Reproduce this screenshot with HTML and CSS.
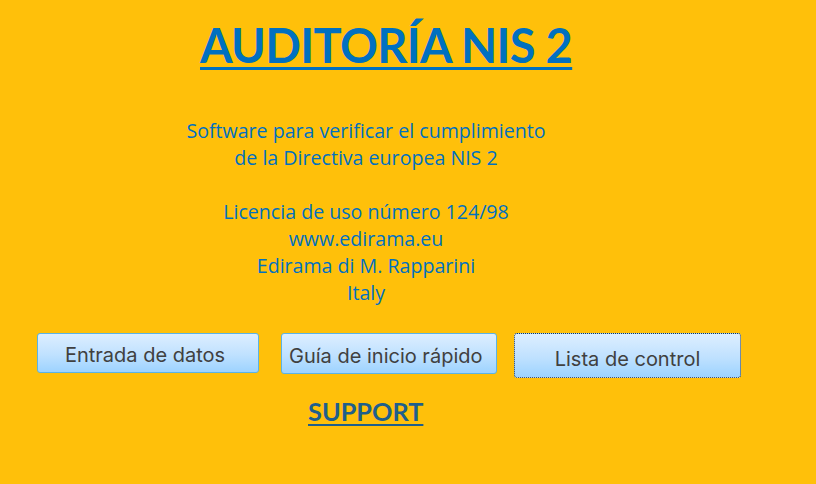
FILE: index.html
```html
<!DOCTYPE html>
<html lang="es">
<head>
<meta charset="utf-8">
<title>AUDITORÍA NIS 2</title>
<link rel="stylesheet" href="styles.css">
</head>
<body>
<div class="page">
  <h1 class="title">AUDITORÍA NIS 2</h1>
  <div class="info">
    <p>Software para verificar el cumplimiento<br>de la Directiva europea NIS 2</p>
    <p>Licencia de uso número 124/98<br>www.edirama.eu<br>Edirama di M. Rapparini<br>Italy</p>
  </div>
  <div class="buttons">
    <button class="btn btn-1">Entrada de datos</button>
    <button class="btn btn-2">Guía de inicio rápido</button>
    <button class="btn btn-3 focused">Lista de control</button>
  </div>
  <a class="support" href="#">SUPPORT</a>
</div>
</body>
</html>
```
FILE: styles.css
```css
html, body {
  margin: 0;
  padding: 0;
  background: #ffc00a;
}
.page {
  width: 816px;
  height: 484px;
  display: flex;
  flex-direction: column;
  align-items: flex-start;
  font-family: "Lato", "Open Sans", sans-serif;
}
.title {
  margin: 17px 0 0 200px;
  font-size: 47px;
  font-weight: 700;
  color: #0070c0;
  line-height: 56px;
  text-decoration: underline;
  text-decoration-thickness: 3px;
  text-underline-offset: 4px;
  letter-spacing: -0.7px;
}
.info {
  width: 732px;
  margin-top: 44px;
  text-align: center;
  color: #0070c0;
  font-family: "Open Sans", "Lato", sans-serif;
  font-size: 19.6px;
  font-weight: 500;
  line-height: 27px;
}
.info p {
  margin: 0 0 27px 0;
}
.info p:last-child {
  margin-bottom: 0;
}
.buttons {
  display: flex;
  align-items: flex-start;
  margin: 27px 0 0 37px;
}
.btn {
  font-family: "Inter", "Open Sans", sans-serif;
  font-size: 20px;
  color: #404040;
  background: linear-gradient(to bottom, #ddeeff 0%, #bfe1ff 55%, #9dd3ff 100%);
  border: 1px solid #5bb3e6;
  border-radius: 3px;
  padding: 0;
  margin: 0;
}
.btn-1 {
  width: 222px;
  height: 40px;
  padding-right: 6px;
  padding-top: 3px;
}
.btn-2 {
  width: 216px;
  height: 41px;
  margin-left: 22px;
  text-align: left;
  padding-left: 7px;
  padding-top: 4px;
}
.btn-3 {
  width: 227px;
  height: 45px;
  margin-left: 17px;
  padding-top: 6px;
}
.focused {
  border: 1px dotted #1f3550;
}
.support {
  margin: 18px 0 0 308px;
  font-size: 25.3px;
  font-weight: 700;
  color: #1f5f8b;
  text-decoration: underline;
  text-decoration-thickness: 2px;
  text-underline-offset: 3px;
}
```
